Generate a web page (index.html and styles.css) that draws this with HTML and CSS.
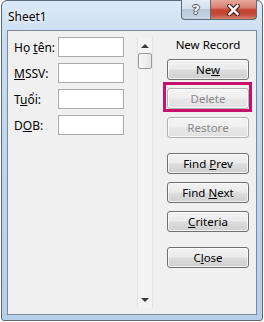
FILE: index.html
```html
<!DOCTYPE html>
<html>
<head>
<meta charset="utf-8">
<link rel="stylesheet" href="styles.css">
</head>
<body>
<div class="window">
  <div class="titlebar">
    <span class="title">Sheet1</span>
    <div class="caption-btns">
      <div class="cbtn help"><span class="q">?</span></div>
      <div class="cbtn close">
        <svg width="13" height="12" viewBox="0 0 13 12">
          <path d="M2.5 2 L10.5 10 M10.5 2 L2.5 10" stroke="#4e2a24" stroke-width="4.6" stroke-linecap="square" fill="none"/>
          <path d="M2.5 2 L10.5 10 M10.5 2 L2.5 10" stroke="#ffffff" stroke-width="2.4" stroke-linecap="square" fill="none"/>
        </svg>
      </div>
    </div>
  </div>
  <div class="client">
    <div class="fields">
      <div class="row"><span class="lbl">Họ <u>t</u>ên:</span><span class="box"></span></div>
      <div class="row"><span class="lbl"><u>M</u>SSV:</span><span class="box"></span></div>
      <div class="row"><span class="lbl">T<u>u</u>ổi:</span><span class="box"></span></div>
      <div class="row"><span class="lbl">D<u>O</u>B:</span><span class="box"></span></div>
    </div>
    <div class="scrollbar">
      <span class="arrow up"></span>
      <span class="thumb"></span>
      <span class="track"></span>
      <span class="arrow down"></span>
    </div>
    <div class="actions">
      <div class="caption">New Record</div>
      <button class="btn">Ne<u>w</u></button>
      <div class="hl-wrap"><button class="btn" disabled>Delete</button><span class="hl"></span></div>
      <button class="btn" disabled>Restore</button>
      <button class="btn sep">Find <u>P</u>rev</button>
      <button class="btn">Find <u>N</u>ext</button>
      <button class="btn"><u>C</u>riteria</button>
      <button class="btn sep">C<u>l</u>ose</button>
    </div>
  </div>
</div>
</body>
</html>
```

FILE: styles.css
```css
* { box-sizing: border-box; }
html, body { margin: 0; padding: 0; background: #ffffff; }
body {
  font-family: "Noto Sans", "Liberation Sans", sans-serif;
  font-size: 12px;
  color: #000;
}
.window {
  margin-left: 1px;
  width: 262px;
  height: 321px;
  border: 1px solid #5b6a7b;
  border-radius: 6px 6px 3px 3px;
  background: linear-gradient(to bottom, #dbe9f7 0%, #c9ddf2 12%, #bcd4ee 60%, #b6cfea 100%);
  padding: 0 5px 5px 5px;
  display: flex;
  flex-direction: column;
}
.titlebar {
  height: 29px;
  display: flex;
  align-items: flex-start;
  justify-content: space-between;
}
.title {
  margin-top: 7px;
  margin-left: 1px;
  font-size: 12px;
  color: #000;
  text-shadow: 0 0 6px #fff, 0 0 3px #fff;
}
.caption-btns {
  display: flex;
  margin-top: -1px;
  height: 20px;
}
.cbtn {
  height: 20px;
  display: flex;
  align-items: center;
  justify-content: center;
  border: 1px solid #5d6b7a;
  border-top: none;
}
.help {
  width: 29px;
  border-radius: 0 0 0 4px;
  border-right: none;
  background: linear-gradient(to bottom, #e4edf6 0%, #d3dfeb 45%, #b9c9d9 50%, #c6d4e2 100%);
}
.q {
  font-family: "DejaVu Sans", sans-serif;
  font-weight: bold;
  font-size: 13px;
  color: #fff;
  line-height: 1;
  text-shadow: -1px 0 #47505b, 1px 0 #47505b, 0 -1px #47505b, 0 1px #47505b;
}
.close {
  width: 47px;
  border-radius: 0 0 4px 0;
  background: linear-gradient(to bottom, #e8a99b 0%, #d8806f 40%, #c74230 52%, #c24a38 75%, #d5806e 100%);
}
.close svg { display: block; }

.client {
  flex: 1;
  border: 1px solid #7d8b9b;
  background: #f0f0f0;
  display: flex;
  align-items: flex-start;
}
.fields {
  padding: 6px 0 0 6px;
  display: flex;
  flex-direction: column;
  gap: 6px;
}
.row {
  display: flex;
  align-items: center;
  height: 20px;
}
.lbl {
  width: 44px;
  white-space: nowrap;
}
.box {
  width: 66px;
  height: 20px;
  background: #fff;
  border: 1px solid #ababab;
}
.scrollbar {
  margin: 6px 0 0 13px;
  width: 16px;
  height: 271px;
  border-left: 1px solid #e4e4e4;
  border-right: 1px solid #e4e4e4;
  background: #f3f3f3;
  display: flex;
  flex-direction: column;
  align-items: center;
}
.arrow {
  width: 0;
  height: 0;
  border-left: 4px solid transparent;
  border-right: 4px solid transparent;
}
.arrow.up {
  margin-top: 7px;
  border-bottom: 4px solid #3a3a3a;
}
.arrow.down {
  margin-bottom: 6px;
  border-top: 4px solid #3a3a3a;
}
.thumb {
  margin-top: 5px;
  width: 14px;
  height: 16px;
  border: 1px solid #9a9a9a;
  border-radius: 2px;
  background: linear-gradient(to right, #f6f6f6, #e6e6e6);
}
.track { flex: 1; }

.actions {
  margin: 6px 0 0 14px;
  width: 82px;
  display: flex;
  flex-direction: column;
  gap: 8px;
}
.caption {
  height: 14px;
  line-height: 16px;
  text-align: center;
  white-space: nowrap;
  font-size: 11.5px;
}
.btn {
  font: inherit;
  font-size: 11.5px;
  color: #000;
  width: 82px;
  height: 21px;
  padding: 0;
  border: 1px solid #707070;
  border-radius: 3px;
  background: linear-gradient(to bottom, #f2f2f2 0%, #ebebeb 48%, #dddddd 52%, #cfcfcf 100%);
  box-shadow: inset 0 0 0 1px rgba(255,255,255,0.7);
  text-align: center;
  line-height: 18px;
}
.btn:disabled {
  color: #8a8a8a;
  border-color: #adb2b5;
  background: linear-gradient(to bottom, #f4f4f4 0%, #efefef 48%, #e6e6e6 52%, #e2e2e2 100%);
}
.btn.sep { margin-top: 7px; }
.hl-wrap { position: relative; width: 82px; height: 21px; }
.hl {
  position: absolute;
  top: -6px;
  left: -4px;
  right: -3px;
  bottom: -3px;
  border: 3px solid #c8116b;
}
```
